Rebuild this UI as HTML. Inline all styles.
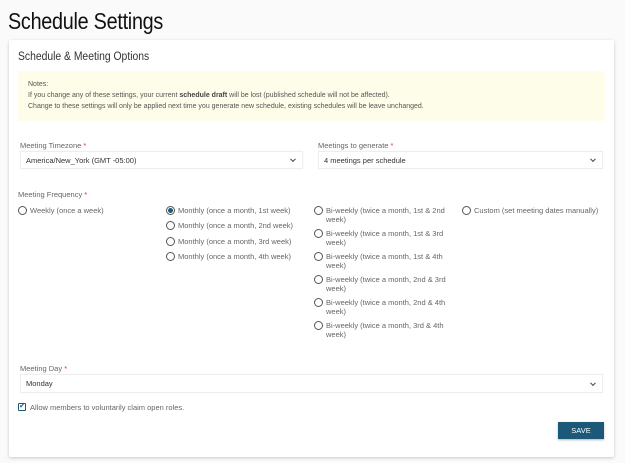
<!DOCTYPE html>
<html><head><style>
*{box-sizing:border-box;margin:0;padding:0}
body{width:625px;height:463px;background:#fafafa;font-family:"Liberation Sans",sans-serif;position:relative;overflow:hidden;color:#555}
.a{position:absolute;white-space:nowrap}
h1{position:absolute;left:8px;top:8px;font-size:23px;font-weight:400;color:#111;letter-spacing:-0.3px;transform:scaleX(0.86);transform-origin:0 0;white-space:nowrap}
.card{position:absolute;left:9px;top:40px;width:605px;height:417px;background:#fff;box-shadow:0 1px 3px rgba(0,0,0,.2);border-radius:2px}
.notes{position:absolute;left:18px;top:71px;width:587px;height:50px;background:#fdfde9;font-size:7px;line-height:11px;color:#555;padding:8px 0 0 10px}
.lbl{font-size:7.5px;color:#666}
.lbl b{color:#d33;font-weight:400}
.sel{position:absolute;background:#fff;border:1px solid #eee;box-shadow:0 0 1px rgba(0,0,0,.08);font-size:7.5px;color:#333;padding-left:5px;display:flex;align-items:center}
.sel:after{content:"";position:absolute;right:7px;top:50%;width:3px;height:3px;border-right:1px solid #444;border-bottom:1px solid #444;transform:translateY(-70%) rotate(45deg)}
.r{position:absolute;font-size:7.5px;color:#666;line-height:8.5px;padding-left:12px}
.r:before{content:"";position:absolute;left:0;top:-1px;width:7px;height:7px;border:1px solid #555;border-radius:50%}
.r.on:before{background:radial-gradient(#1d5b7a 45%,#fff 55%)}
</style></head><body>
<h1>Schedule Settings</h1>
<div class="card"></div>
<div class="a" style="left:18px;top:51px;font-size:11.5px;color:#333;transform:scaleX(0.9);transform-origin:0 0">Schedule &amp; Meeting Options</div>
<div class="notes">Notes:<br>If you change any of these settings, your current <b style="color:#444">schedule draft</b> will be lost (published schedule will not be affected).<br>Change to these settings will only be applied next time you generate new schedule, existing schedules will be leave unchanged.</div>
<div class="a lbl" style="left:20px;top:141px">Meeting Timezone <b>*</b></div>
<div class="a lbl" style="left:318px;top:141px">Meetings to generate <b>*</b></div>
<div class="sel" style="left:20px;top:151px;width:283px;height:18px">America/New_York (GMT -05:00)</div>
<div class="sel" style="left:318px;top:151px;width:285px;height:18px">4 meetings per schedule</div>
<div class="a lbl" style="left:18px;top:190px">Meeting Frequency <b>*</b></div>
<div class="r" style="left:18px;top:207px">Weekly (once a week)</div>
<div class="r on" style="left:166px;top:207px">Monthly (once a month, 1st week)</div>
<div class="r" style="left:166px;top:222px">Monthly (once a month, 2nd week)</div>
<div class="r" style="left:166px;top:238px">Monthly (once a month, 3rd week)</div>
<div class="r" style="left:166px;top:253px">Monthly (once a month, 4th week)</div>
<div class="r" style="left:314px;top:207px">Bi-weekly (twice a month, 1st &amp; 2nd<br>week)</div>
<div class="r" style="left:314px;top:230px">Bi-weekly (twice a month, 1st &amp; 3rd<br>week)</div>
<div class="r" style="left:314px;top:253px">Bi-weekly (twice a month, 1st &amp; 4th<br>week)</div>
<div class="r" style="left:314px;top:276px">Bi-weekly (twice a month, 2nd &amp; 3rd<br>week)</div>
<div class="r" style="left:314px;top:299px">Bi-weekly (twice a month, 2nd &amp; 4th<br>week)</div>
<div class="r" style="left:314px;top:322px">Bi-weekly (twice a month, 3rd &amp; 4th<br>week)</div>
<div class="r" style="left:462px;top:207px">Custom (set meeting dates manually)</div>
<div class="a lbl" style="left:20px;top:364px">Meeting Day <b>*</b></div>
<div class="sel" style="left:20px;top:374px;width:583px;height:19px">Monday</div>
<div class="a" style="left:18px;top:403px;width:8px;height:8px;border:1px solid #1d5b7a;border-radius:1px;font-size:7px;line-height:6px;text-align:center;color:#1d5b7a">✔</div>
<div class="a" style="left:30px;top:403px;font-size:7.5px;color:#666">Allow members to voluntarily claim open roles.</div>
<div class="a" style="left:558px;top:422px;width:46px;height:17px;background:#1c5877;color:#fff;font-size:7.5px;text-align:center;line-height:17px;box-shadow:0 1px 2px rgba(0,0,0,.3)">SAVE</div>
</body></html>
